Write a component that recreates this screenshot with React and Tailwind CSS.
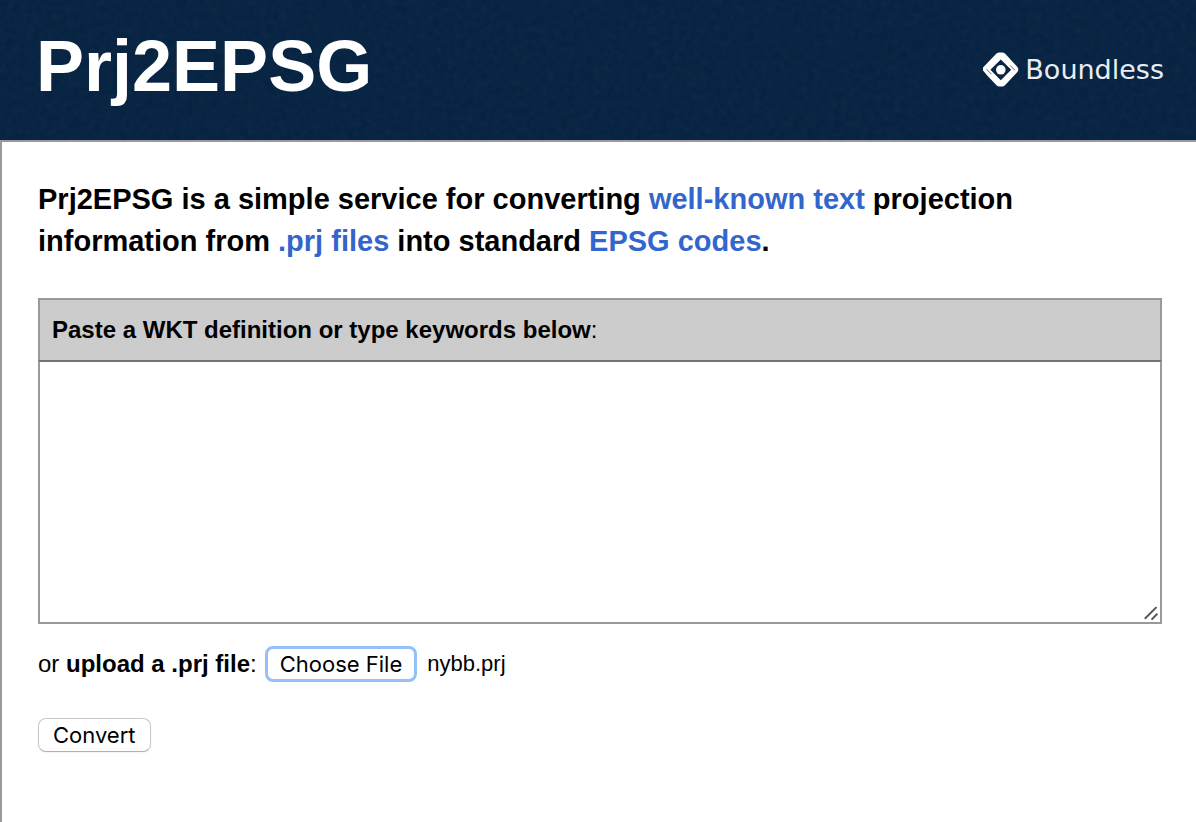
import { useRef, useState } from "react";

function HeaderTexture() {
  return (
    <svg className="pointer-events-none absolute inset-0 h-full w-full opacity-5" aria-hidden="true">
      <filter id="denim">
        <feTurbulence type="fractalNoise" baseFrequency="0.15" numOctaves="3" stitchTiles="stitch" />
        <feColorMatrix type="saturate" values="0" />
      </filter>
      <rect width="100%" height="100%" filter="url(#denim)" />
    </svg>
  );
}

function BoundlessLogo() {
  return (
    <a href="#boundless" className="relative flex items-center gap-1.5 text-[#e9edf3]">
      <svg width="36" height="36" viewBox="0 0 36 36" aria-hidden="true">
        <path
          fill="#fff"
          fillRule="evenodd"
          d="M13.5 1.6Q14.8 0.4 16.4 0.4H19.2Q20.8 0.4 22 1.6L34.2 14.8Q36.4 17.4 34.4 20L22 33.2Q20.8 34.6 19.2 34.6H16.4Q14.8 34.6 13.5 33.2L4.2 23.4L0 18.4V15.4ZM17.8 7.4L7.4 17.8L17.8 28.2L28.2 17.8Z"
        />
        <path d="M3.6 17.2L8.4 22.2M27.2 13.4L32 18.4" stroke="#5b7087" strokeWidth="1" fill="none" />
        <circle cx="17.8" cy="17.8" r="4.8" fill="#fff" />
      </svg>
      <span className="font-['DejaVu_Sans',sans-serif] text-[27px] leading-9">Boundless</span>
    </a>
  );
}

export default function App() {
  const fileInput = useRef(null);
  const [fileName, setFileName] = useState("nybb.prj");

  return (
    <div className="flex min-h-screen flex-col bg-white font-['Liberation_Sans',Arial,sans-serif] text-black">
      <header className="relative flex items-center justify-between bg-[#042140] py-[18px] pr-8 pl-9">
        <HeaderTexture />
        <h1 className="relative pb-2 text-[72px] leading-24 font-bold text-white">Prj2EPSG</h1>
        <BoundlessLogo />
      </header>

      <main className="grow border-t-2 border-l-2 border-[#999] pt-9 pr-[34px] pl-9">
        <p className="max-w-[1000px] text-[29px] leading-[42px] font-bold">
          Prj2EPSG is a simple service for converting{" "}
          <a href="#wkt" className="text-[#3366cc]">well-known text</a> projection information from{" "}
          <a href="#prj" className="text-[#3366cc]">.prj files</a> into standard{" "}
          <a href="#epsg" className="text-[#3366cc]">EPSG codes</a>.
        </p>

        <form className="mt-9" onSubmit={(event) => event.preventDefault()}>
          <label
            htmlFor="terms"
            className="block border-2 border-b-0 border-[#999] bg-[#ccc] px-3 py-3 text-[24px] leading-9"
          >
            <strong>Paste a WKT definition or type keywords below</strong>:
          </label>
          <div className="relative">
            <textarea
              id="terms"
              className="block h-[264px] w-full resize-none border-2 border-[#999] border-t-[#737373] bg-white p-3 text-[22px] outline-none"
            />
            <svg
              className="pointer-events-none absolute right-1 bottom-1 text-[#555]"
              width="14"
              height="14"
              viewBox="0 0 14 14"
              aria-hidden="true"
            >
              <path d="M0.8 12.8L12.5 1.1M7.5 13.6L13.4 7.7" stroke="currentColor" strokeWidth="2" />
            </svg>
          </div>

          <div className="mt-[22px] flex items-center text-[24px] leading-9">
            <label htmlFor="prj-file">
              or <strong>upload a .prj file</strong>:
            </label>
            <input
              ref={fileInput}
              id="prj-file"
              type="file"
              accept=".prj"
              tabIndex={-1}
              className="sr-only"
              onChange={(event) => setFileName(event.target.files[0]?.name ?? "")}
            />
            <button
              type="button"
              onClick={() => fileInput.current.click()}
              className="ml-2 h-9 rounded-lg border-3 border-[#93c1f5] bg-white px-3 font-[Inter,sans-serif] text-[22px] leading-7"
            >
              Choose File
            </button>
            <span className="ml-2.5 text-[22px]">{fileName}</span>
          </div>

          <button
            type="submit"
            className="mt-9 h-[34px] rounded-lg border border-[#c8c8c8] border-b-[#b0b0b0] bg-white px-3.5 font-[Inter,sans-serif] text-[22px] leading-7 shadow-xs"
          >
            Convert
          </button>
        </form>
      </main>
    </div>
  );
}
